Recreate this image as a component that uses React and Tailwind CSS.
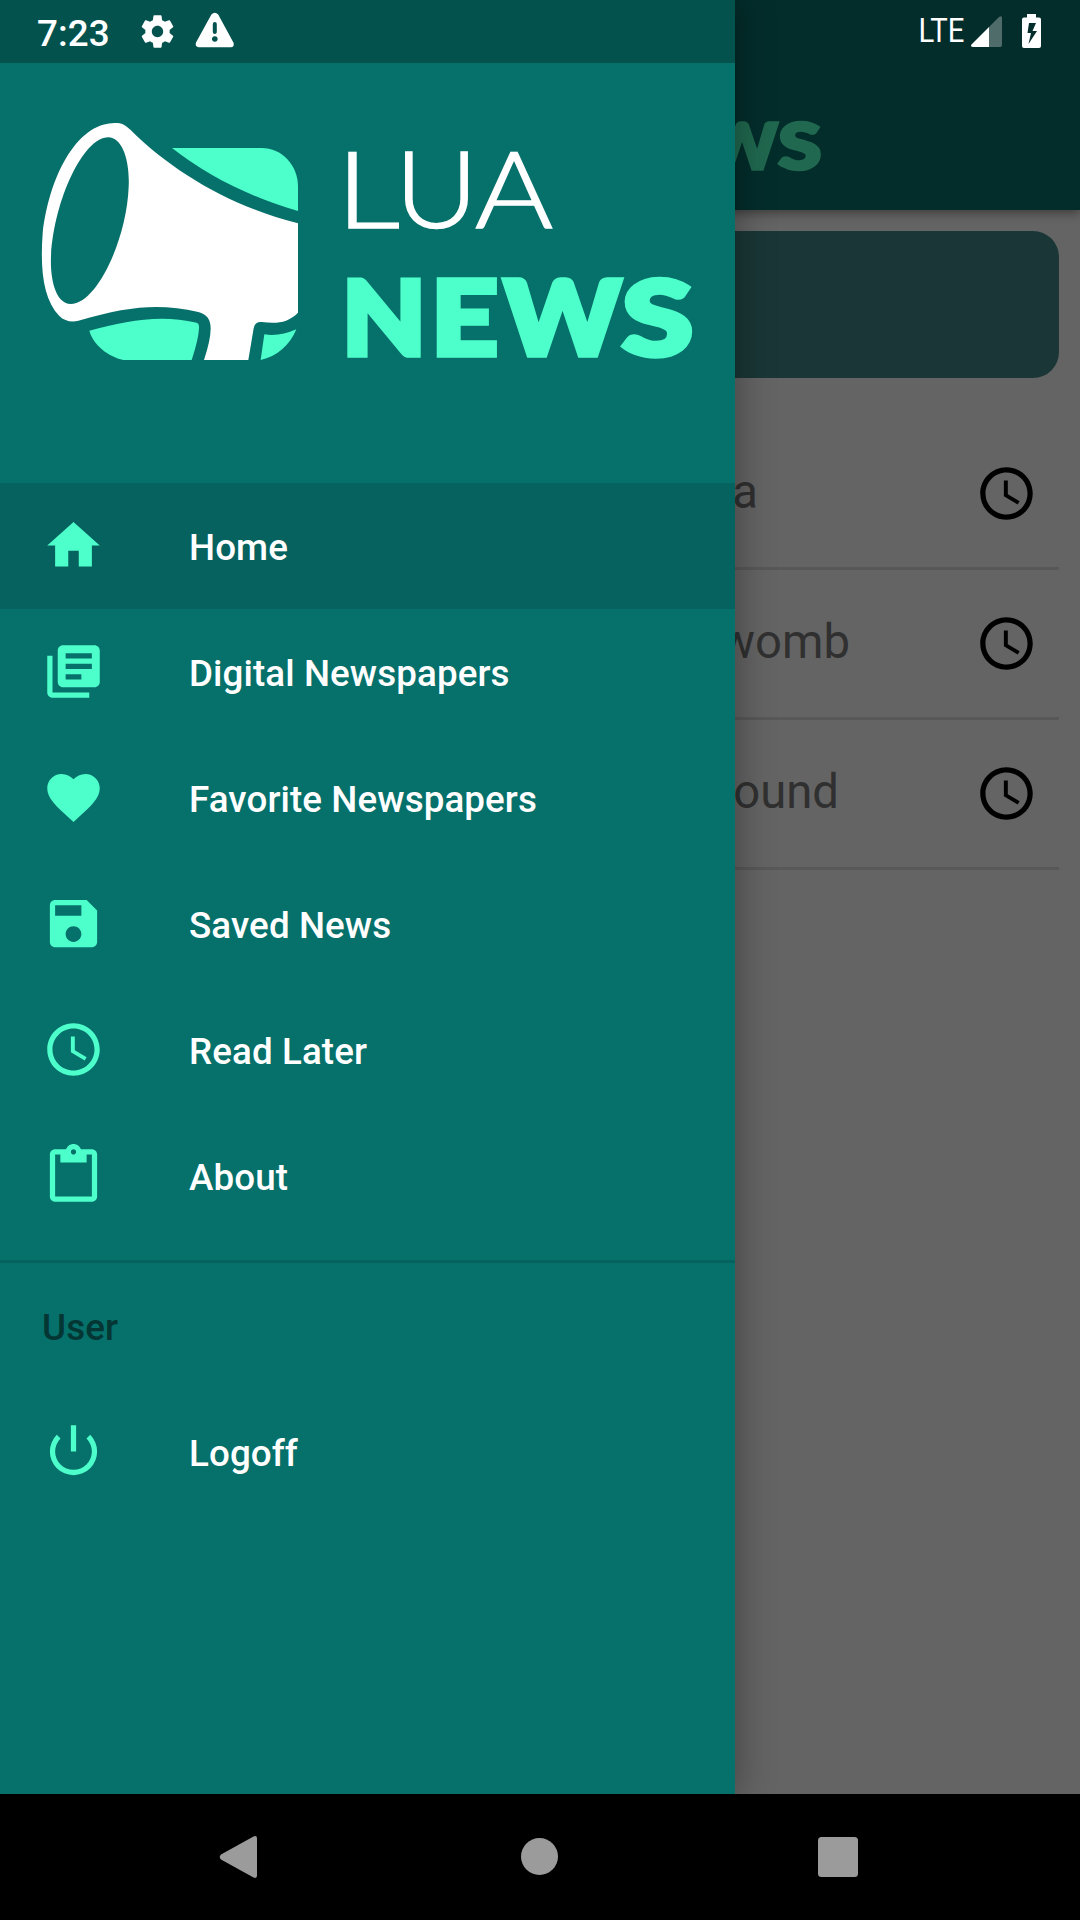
const ICONS = {
  home: 'M10 20v-6h4v6h5v-8h3L12 3 2 12h3v8z',
  library:
    'M4 6H2v14c0 1.1.9 2 2 2h14v-2H4V6zm16-4H8c-1.1 0-2 .9-2 2v12c0 1.1.9 2 2 2h12c1.1 0 2-.9 2-2V4c0-1.1-.9-2-2-2zm-1 9H9V9h10v2zm-4 4H9v-2h6v2zm4-8H9V5h10v2z',
  heart:
    'M12 21.35l-1.45-1.32C5.4 15.36 2 12.28 2 8.5 2 5.42 4.42 3 7.5 3c1.74 0 3.41.81 4.5 2.09C13.09 3.81 14.76 3 16.5 3 19.58 3 22 5.42 22 8.5c0 3.78-3.4 6.86-8.55 11.54L12 21.35z',
  save: 'M17 3H5c-1.11 0-2 .9-2 2v14c0 1.1.89 2 2 2h14c1.1 0 2-.9 2-2V7l-4-4zm-5 16c-1.66 0-3-1.34-3-3s1.34-3 3-3 3 1.34 3 3-1.34 3-3 3zm3-10H5V5h10v4z',
  clock:
    'M11.99 2C6.47 2 2 6.48 2 12s4.47 10 9.99 10C17.52 22 22 17.52 22 12S17.52 2 11.99 2zM12 20c-4.42 0-8-3.58-8-8s3.58-8 8-8 8 3.58 8 8-3.58 8-8 8zM12.5 7H11v6l5.25 3.15.75-1.23-4.5-2.67z',
  clipboard:
    'M19 2h-4.18C14.4.84 13.3 0 12 0c-1.3 0-2.4.84-2.82 2H5c-1.1 0-2 .9-2 2v16c0 1.1.9 2 2 2h14c1.1 0 2-.9 2-2V4c0-1.1-.9-2-2-2zm-7 0c.55 0 1 .45 1 1s-.45 1-1 1-1-.45-1-1 .45-1 1-1zm7 18H5V4h2v3h10V4h2v16z',
  power:
    'M13 2h-2v10h2zM18.36 5.64l-1.41 1.41A7 7 0 1 1 7.05 7.05L5.64 5.64A9 9 0 1 0 18.36 5.64z',
  gear: 'M19.43 12.98c.04-.32.07-.64.07-.98s-.03-.66-.07-.98l2.11-1.65c.19-.15.24-.42.12-.64l-2-3.46c-.12-.22-.39-.3-.61-.22l-2.49 1c-.52-.4-1.08-.73-1.69-.98l-.38-2.65C14.46 2.18 14.25 2 14 2h-4c-.25 0-.46.18-.49.42l-.38 2.65c-.61.25-1.17.59-1.69.98l-2.49-1c-.23-.09-.49 0-.61.22l-2 3.46c-.13.22-.07.49.12.64l2.11 1.65c-.04.32-.07.65-.07.98s.03.66.07.98l-2.11 1.65c-.19.15-.24.42-.12.64l2 3.46c.12.22.39.3.61.22l2.49-1c.52.4 1.08.73 1.69.98l.38 2.65c.03.24.24.42.49.42h4c.25 0 .46-.18.49-.42l.38-2.65c.61-.25 1.17-.59 1.69-.98l2.49 1c.23.09.49 0 .61-.22l2-3.46c.12-.22.07-.49-.12-.64l-2.11-1.65zM12 15.5c-1.93 0-3.5-1.57-3.5-3.5s1.57-3.5 3.5-3.5 3.5 1.57 3.5 3.5-1.57 3.5-3.5 3.5z',
};

const MENU = [
  { icon: 'home', label: 'Home', active: true },
  { icon: 'library', label: 'Digital Newspapers' },
  { icon: 'heart', label: 'Favorite Newspapers' },
  { icon: 'save', label: 'Saved News' },
  { icon: 'clock', label: 'Read Later' },
  { icon: 'clipboard', label: 'About' },
];

// Visible tail of each list entry and the width it reaches past the drawer edge
const ARTICLES = [
  { text: 'a', width: 'w-[758px]' },
  { text: 'womb', width: 'w-[850px]' },
  { text: 'ound', width: 'w-[839px]' },
];

function Icon({ name, className }) {
  return (
    <svg viewBox="0 0 24 24" fill="currentColor" className={className}>
      <path d={ICONS[name]} />
    </svg>
  );
}

function NewsWord() {
  return (
    <g fontFamily="Lato, sans-serif" fontWeight="900" fontSize="102.500" stroke="currentColor" strokeWidth="5.500">
      <text y="77.500" x="0" textLength="84" lengthAdjust="spacingAndGlyphs">N</text>
      <text y="77.500" x="89" textLength="67" lengthAdjust="spacingAndGlyphs">E</text>
      <text y="77.500" x="162" textLength="117" lengthAdjust="spacingAndGlyphs">W</text>
      <text y="77.500" x="280" textLength="71" lengthAdjust="spacingAndGlyphs">S</text>
    </g>
  );
}

function Logo() {
  return (
    <svg viewBox="42 123 652 238" className="h-[238px] w-[652px] shrink-0 overflow-visible">
      <g transform="scale(0.33333)">
        <path
          fill="#fff"
          fillRule="evenodd"
          d="M345 369C366 369 375 374 392 390C520 518 700 622 894 670V938C862 970 830 971 785 966Q765 964 761 985L745 1080H612Q632 1020 632 985Q632 945 595 936C480 910 390 917 235 962C215 968 193 963 178 948C130 898 120 810 128 700C146 540 225 369 345 369ZM325 412C366 412 390 480 386 560C380 720 290 912 212 912C168 912 150 840 153 770C162 600 250 412 325 412Z"
        />
        <g fill="#4dffca">
          <path d="M516 444H785C845 444 894 495 894 560V633C745 590 620 525 516 444Z" />
          <path d="M268 992C380 962 480 942 590 968Q597 970 597 978Q598 1010 575 1080H370C325 1070 280 1035 268 992Z" />
          <path d="M793 1003Q840 1010 889 988C870 1035 830 1070 782 1080Z" />
        </g>
      </g>
      <g fill="#fff" stroke="#fff" strokeWidth="1.600" fontFamily="Lato, sans-serif" fontWeight="300" fontSize="107">
        <text y="228" x="336" textLength="64" lengthAdjust="spacingAndGlyphs">L</text>
        <text y="228" x="395" textLength="83" lengthAdjust="spacingAndGlyphs">U</text>
        <text y="228" x="475" textLength="78" lengthAdjust="spacingAndGlyphs">A</text>
      </g>
      <g transform="translate(342 277)" className="text-[#4dffca]" fill="currentColor">
        <NewsWord />
      </g>
    </svg>
  );
}

function MenuItem({ icon, label, active }) {
  return (
    <div className={`flex h-[126px] items-center pl-[42px] ${active ? 'bg-[#06625e]' : ''}`}>
      <Icon name={icon} className="-mt-[2px] h-[63px] w-[63px] text-[#4dffca]" />
      <span className="ml-[84px] mt-[4px] text-[36.75px] font-medium leading-none tracking-[0.1px] text-white">
        {label}
      </span>
    </div>
  );
}

function StatusBar() {
  return (
    <div className="absolute inset-x-0 top-0 flex h-[63px] items-center text-white">
      <span className="ml-[37px] mt-[5px] w-[101px] text-[36.75px] font-medium leading-none tracking-[0.1px]">7:23</span>
      <Icon name="gear" className="h-[39px] w-[39px]" />
      <svg viewBox="195 12 40 36" className="ml-[18px] mt-[-3px] h-[36px] w-[40px]">
        <path
          fill="currentColor"
          fillRule="evenodd"
          d="M211.4 14.6Q214.8 10.8 218.2 14.6L233.4 42.4Q234.8 46.8 231 47.2H198.6Q194.8 46.8 196 42.4ZM214.8 22a2 2 0 0 0-2 2v8a2 2 0 0 0 4 0v-8a2 2 0 0 0-2-2ZM214.8 36.2a2.8 2.8 0 1 0 .01 0Z"
        />
      </svg>
      <div className="ml-auto mr-[39px] flex h-[63px]">
        <svg viewBox="910 0 56 63" className="h-[63px] w-[56px] overflow-visible" fill="currentColor">
          <text x="918.500" y="42" fontSize="32.500" textLength="46" lengthAdjust="spacingAndGlyphs">LTE</text>
        </svg>
        <svg viewBox="966 0 75 63" className="h-[63px] w-[75px]" fill="currentColor">
          <path opacity=".3" d="M989 27L999 17Q1002 15 1002 18V45Q1002 47 1000 47H989Z" />
          <path d="M989 27V47H973Q970 46.500 971.500 44.500Z" />
          <path
            fillRule="evenodd"
            d="M1027 17.500V14H1036V17.500H1039Q1041 17.500 1041 19.500V46Q1041 48 1039 48H1024Q1022 48 1022 46V19.500Q1022 17.500 1024 17.500ZM1029 23L1027.500 33H1031L1028.500 44L1037 31H1032.500L1036 23Z"
          />
        </svg>
      </div>
    </div>
  );
}

function Drawer() {
  return (
    <aside className="absolute left-0 top-0 flex h-[1794px] w-[735px] flex-col bg-[#06706b] shadow-[0_0_34px_4px_rgba(0,0,0,0.3)]">
      <div className="h-[63px] shrink-0 bg-[#04524e]" />
      <div className="flex h-[420px] shrink-0 items-start px-[42px] pt-[60px]">
        <Logo />
      </div>
      <nav>
        {MENU.map((item) => (
          <MenuItem key={item.label} {...item} />
        ))}
      </nav>
      <div className="mt-[21px] h-[3px] bg-[#06625e]" />
      <div className="flex h-[126px] items-center pl-[42px]">
        <span className="mt-[4px] text-[36.75px] font-medium leading-none tracking-[0.1px] text-[#043634]">User</span>
      </div>
      <MenuItem icon="power" label="Logoff" />
    </aside>
  );
}

export default function App() {
  return (
    <div className="relative flex h-[1920px] w-[1080px] flex-col overflow-hidden bg-black font-[Roboto,sans-serif]">
      <div className="flex h-[1794px] flex-col overflow-hidden bg-[#646464]">
        <header className="relative flex h-[210px] shrink-0 bg-[#032d2b] pt-[122px] shadow-[0_3px_10px_rgba(0,0,0,0.4)]">
          <svg
            viewBox="0 0 352 84"
            className="ml-[608px] h-[51px] w-[214px] overflow-visible text-[#20684f]"
            fill="currentColor"
          >
            <NewsWord />
          </svg>
        </header>
        <main className="px-[21px] pt-[21px]">
          <div className="h-[147px] rounded-[26px] bg-[#1a3636]" />
          <div className="mt-[42px]">
            {ARTICLES.map((a) => (
              <div
                key={a.text}
                className="flex h-[150px] items-center border-b-[3px] border-[#585858] pr-[21px]"
              >
                <div
                  className={`-ml-[21px] -mt-[1px] shrink-0 text-right text-[47.25px] leading-none text-[#303030] ${a.width}`}
                >
                  {a.text}
                </div>
                <Icon name="clock" className="ml-auto h-[63px] w-[63px] shrink-0 text-black" />
              </div>
            ))}
          </div>
        </main>
      </div>
      <Drawer />
      <StatusBar />
      <footer className="relative h-[126px] bg-black">
        <svg viewBox="0 1794 1080 126" className="h-[126px] w-[1080px]" fill="#9b9b9b">
          <path d="M221 1854.500L253.500 1836.500Q257 1835 257 1838.500V1875.500Q257 1879 253.500 1877.500L221 1859.500Q218.500 1857 221 1854.500Z" />
          <circle cx="539.500" cy="1856.500" r="18.500" />
          <rect x="818" y="1837" width="40" height="40" rx="3.500" />
        </svg>
      </footer>
    </div>
  );
}
